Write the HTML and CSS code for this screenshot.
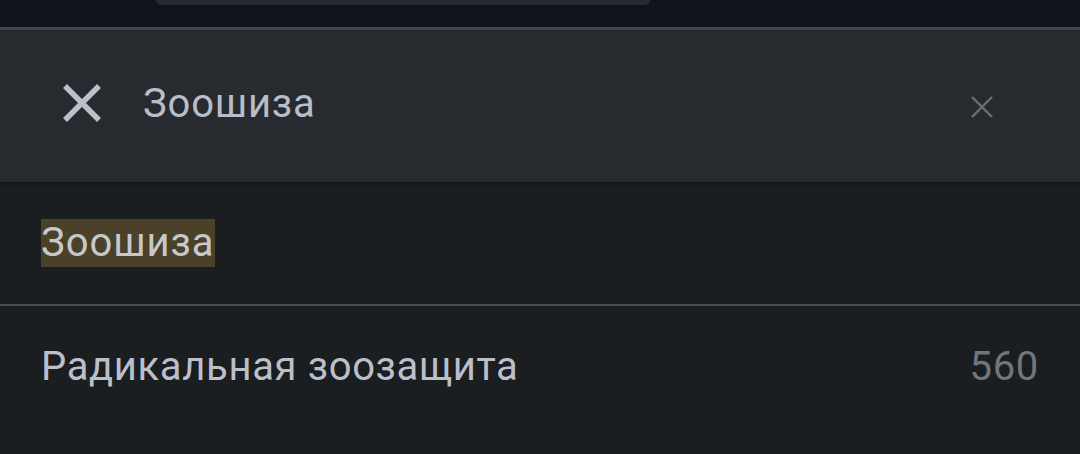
FILE: index.html
```html
<!DOCTYPE html>
<html lang="ru">
<head>
<meta charset="utf-8">
<link rel="stylesheet" href="styles.css">
</head>
<body>
<div class="topbar"><div class="pill"></div></div>
<div class="search">
  <button class="close" aria-label="Закрыть">
    <svg width="40" height="40" viewBox="0 0 40 40"><path d="M3 3 L37 37 M37 3 L3 37" stroke="#bdc0c9" stroke-width="5.5" fill="none"/></svg>
  </button>
  <div class="query">Зоошиза</div>
  <button class="clear" aria-label="Очистить">
    <svg width="22" height="22" viewBox="0 0 22 22"><path d="M1 1 L21 21 M21 1 L1 21" stroke="#6b6e74" stroke-width="2.4" fill="none"/></svg>
  </button>
</div>
<ul class="results">
  <li class="row first"><span class="name"><mark class="hl">Зоошиза</mark></span></li>
  <li class="row"><span class="name">Радикальная зоозащита</span><span class="count">560</span></li>
</ul>
</body>
</html>
```

FILE: styles.css
```css
html, body {
  margin: 0;
  padding: 0;
  background: #1b1e21;
  font-family: Roboto, "Noto Sans", sans-serif;
  overflow: hidden;
}
.topbar {
  height: 27px;
  background: #10131b;
  border-bottom: 3px solid #43464c;
  display: flex;
}
.pill {
  margin-left: 156px;
  width: 494px;
  height: 5px;
  background: #252a35;
  border-radius: 0 0 22px 22px;
}
.search {
  height: 146px;
  padding: 0 87px 6px 62px;
  background: #272b30;
  display: flex;
  align-items: center;
  box-shadow: 0 2px 3px rgba(0,0,0,0.35);
  position: relative;
  z-index: 1;
}
.close, .clear {
  background: none;
  border: 0;
  padding: 0;
  display: flex;
}
.query {
  flex: 1;
  margin-left: 41px;
  font-size: 40px;
  color: #b9bdc8;
  letter-spacing: 0.8px;
}
.clear { margin-top: 8px; }
.results {
  list-style: none;
  margin: 0;
  padding: 0;
}
.row {
  height: 120px;
  display: flex;
  align-items: center;
  justify-content: space-between;
  padding: 0 41px;
  font-size: 40px;
  color: #bcbfca;
  letter-spacing: 0.65px;
}
.row.first {
  height: 122px;
}
.row + .row {
  border-top: 2px solid #4a4c50;
}
.hl {
  background: #4a4128;
  color: #c6c8cc;
  padding: 0;
  line-height: 48px;
  letter-spacing: 0.95px;
  display: inline-block;
}
.count {
  color: #72757d;
}
```
